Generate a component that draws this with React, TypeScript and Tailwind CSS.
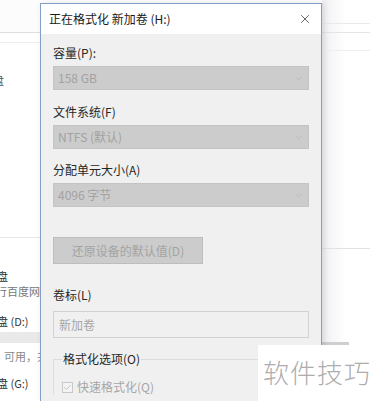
import { Check, ChevronDown, X } from "lucide-react";

const font = { fontFamily: '"Noto Sans CJK SC", "Noto Sans", sans-serif' };

function Field({ label, value }: { label: string; value: string }) {
  return (
    <div className="flex flex-col">
      <div className="h-[16px] text-[12px] leading-[16px] text-[#262626]">{label}</div>
      <div className="mt-[5px] flex h-[24px] items-center justify-between border border-[#c4c4c4] bg-[#cccccc] pl-[4px] pr-[4px]">
        <span className="text-[12px] leading-none text-[#a2a2a2]">{value}</span>
        <ChevronDown size={11} strokeWidth={1.5} className="text-[#b4b4b4]" />
      </div>
    </div>
  );
}

function Explorer() {
  return (
    <div className="flex h-full w-full bg-white">
      {/* left strip */}
      <div className="flex w-[40px] flex-col overflow-hidden">
        <div className="h-[32px] shrink-0 bg-[#fcfcfc]" />
        <div className="h-[10px] shrink-0 border-t border-[#dedede]" />
        <div className="h-[1px] shrink-0 bg-[#eeeeee]" />
        <div className="mt-[30px] -ml-[7px] text-[11px] leading-[14px] text-[#555]">盘</div>
        <div className="mt-[150px] h-[1px] shrink-0 bg-[#e6e6e6]" />
        <div className="mt-[31px] -ml-[3px] text-[11px] leading-[14px] text-[#333]">盘</div>
        <div className="mt-[1px] -ml-[4px] whitespace-nowrap text-[11px] leading-[14px] text-[#777]">
          行百度网盘
        </div>
        <div className="mt-[16px] -ml-[3px] whitespace-nowrap text-[11px] leading-[14px] text-[#333]">
          盘 (D:)
        </div>
        <div className="mt-[4px] h-[11px] shrink-0 bg-[#e9e9e9]" />
        <div className="mt-[6px] pl-[4px] whitespace-nowrap text-[11px] leading-[14px] text-[#888]">
          可用，共
        </div>
        <div className="mt-[13px] -ml-[3px] whitespace-nowrap text-[11px] leading-[14px] text-[#333]">
          盘 (G:)
        </div>
      </div>
      <div className="flex-1" />
      {/* right strip */}
      <div className="flex w-[48px] flex-col bg-gradient-to-r from-[#f0f0f4] via-white to-white">
        <div className="h-[23px] shrink-0" />
        <div className="h-[1px] shrink-0 bg-[#eaeaea]" />
        <div className="h-[8px] shrink-0" />
        <div className="h-[1px] shrink-0 bg-[#e4e4e4]" />
        <div className="h-[17px] shrink-0" />
        <div className="h-[1px] shrink-0 bg-[#efefef]" />
        <div className="h-[197px] shrink-0" />
        <div className="h-[1px] shrink-0 bg-[#e2e2e2]" />
        <div className="h-[93px] shrink-0" />
        <div className="h-[4px] w-[27px] shrink-0 bg-[#cfcfcf]" />
      </div>
    </div>
  );
}

function FormatDialog() {
  return (
    <div className="flex h-full flex-col border border-[#7f9fc6] bg-[#f0f0f0] shadow-[2px_0_6px_rgba(0,0,0,0.12)]">
      {/* title bar */}
      <div className="flex h-[30px] shrink-0 items-center justify-between bg-white pl-[8px] pr-[9px]">
        <span className="text-[12px] leading-none text-[#1a1a1a]">正在格式化 新加卷 (H:)</span>
        <X size={14} strokeWidth={1.3} className="text-[#333]" />
      </div>

      <div className="flex flex-col px-[12px] pt-[11px]">
        <Field label="容量(P):" value="158 GB" />
        <div className="mt-[14px]">
          <Field label="文件系统(F)" value="NTFS (默认)" />
        </div>
        <div className="mt-[13px]">
          <Field label="分配单元大小(A)" value="4096 字节" />
        </div>

        <button className="mt-[30px] flex h-[27px] w-[150px] items-center justify-center border border-[#bdbdbd] bg-[#cccccc] text-[12px] text-[#a3a3a3]">
          还原设备的默认值(D)
        </button>

        <div className="mt-[23px] h-[16px] text-[12px] leading-[16px] text-[#262626]">卷标(L)</div>
        <div className="mt-[8px] flex h-[27px] items-center border border-[#d2d2d2] bg-[#f0f0f0] pl-[5px] text-[12px] text-[#a6a6a6]">
          新加卷
        </div>

        {/* group box */}
        <div className="mt-[21px] flex flex-col border-l border-t border-[#dcdcdc] pl-[8px]">
          <div className="-mt-[9px] w-fit bg-[#f0f0f0] px-[1px] text-[12px] leading-[16px] text-[#262626]">
            格式化选项(O)
          </div>
          <div className="mt-[12px] flex items-center gap-[4px]">
            <div className="flex h-[11px] w-[11px] items-center justify-center border border-[#c8c8c8] bg-[#f4f4f4]">
              <Check size={9} strokeWidth={2} className="text-[#b5b5b5]" />
            </div>
            <span className="text-[12px] leading-[16px] text-[#a6a6a6]">快速格式化(Q)</span>
          </div>
        </div>
      </div>
    </div>
  );
}

export default function App() {
  return (
    <div className="relative h-[401px] w-[370px] overflow-hidden bg-white" style={font}>
      <Explorer />

      <div className="absolute bottom-[-20px] left-[40px] top-[3px] w-[282px]">
        <FormatDialog />
      </div>

      {/* watermark */}
      <div className="absolute bottom-0 left-[258px] right-0 top-[345px] bg-white pl-[5px] pt-[11px]">
        <span className="whitespace-nowrap text-[26px] font-light leading-[32px] tracking-[1px] text-[#adadad]">
          软件技巧
        </span>
      </div>
    </div>
  );
}
